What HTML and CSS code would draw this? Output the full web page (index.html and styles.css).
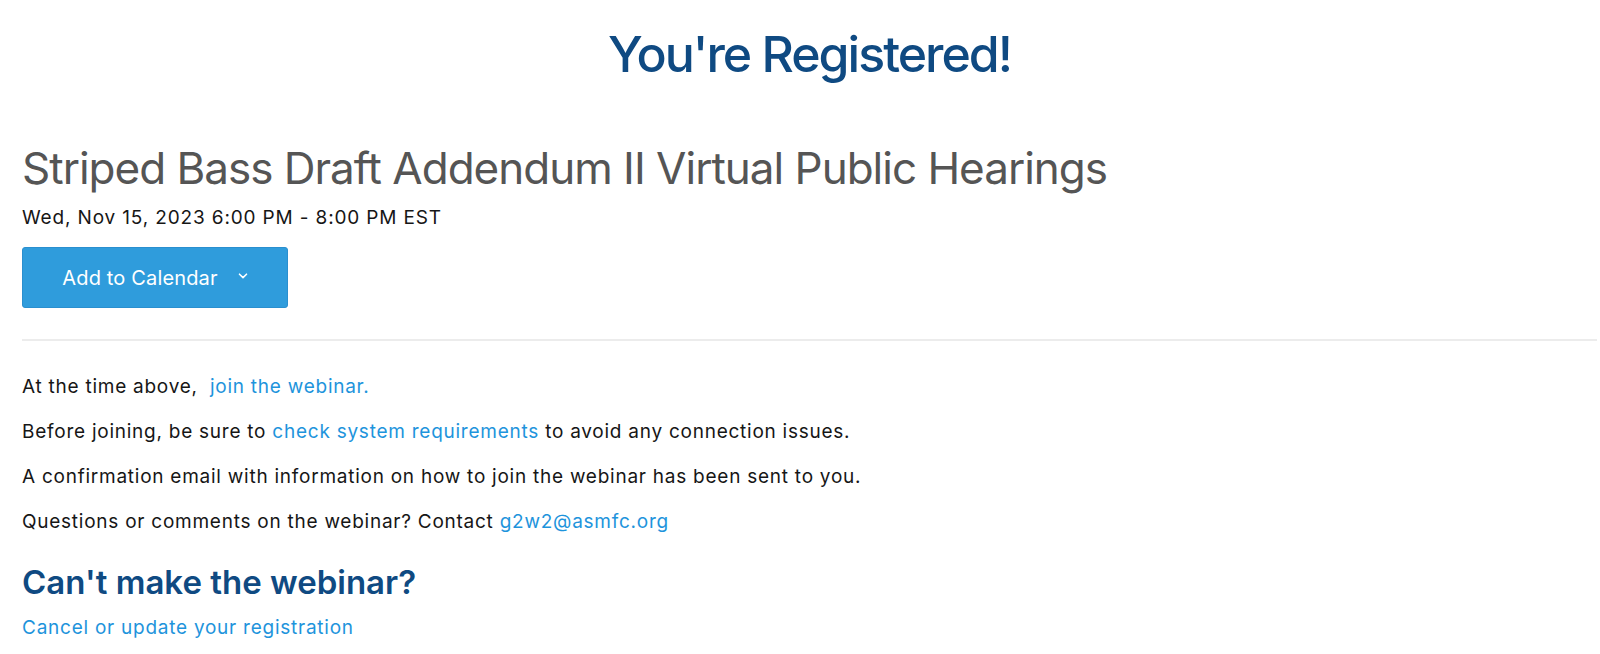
FILE: index.html
```html
<!DOCTYPE html>
<html lang="en">
<head>
<meta charset="utf-8">
<title>You're Registered!</title>
<link rel="stylesheet" href="styles.css">
</head>
<body>
<main class="page">
  <h1 class="page-title">You're Registered!</h1>
  <section class="event">
    <h2 class="event-title">Striped Bass Draft Addendum II Virtual Public Hearings</h2>
    <div class="event-date">Wed, Nov 15, 2023 6:00 PM - 8:00 PM EST</div>
    <button class="cal-btn" type="button">
      <span>Add to Calendar</span>
      <svg class="chev" width="10" height="6" viewBox="0 0 10 6" aria-hidden="true"><path d="M1.5 1.2 L5 4.6 L8.5 1.2" fill="none" stroke="#fff" stroke-width="1.6" stroke-linecap="round" stroke-linejoin="round"/></svg>
    </button>
  </section>
  <hr class="divider">
  <section class="info">
    <p>At the time above,&nbsp; <a href="#">join the webinar.</a></p>
    <p>Before joining, be sure to <a href="#">check system requirements</a> to avoid any connection issues.</p>
    <p>A confirmation email with information on how to join the webinar has been sent to you.</p>
    <p>Questions or comments on the webinar? Contact <a href="#">g2w2@asmfc.org</a></p>
  </section>
  <h3 class="cant">Can't make the webinar?</h3>
  <a class="cancel" href="#">Cancel or update your registration</a>
</main>
</body>
</html>
```

FILE: styles.css
```css
html, body {
  margin: 0;
  padding: 0;
  background: #fff;
}
body {
  font-family: Inter, "Noto Sans", "Liberation Sans", sans-serif;
  color: #161616;
}
.page {
  padding: 0 3px 0 22px;
}
.page-title {
  margin: 23px 0 0;
  text-align: center;
  font-size: 50px;
  line-height: 62px;
  font-weight: 500;
  letter-spacing: -2px;
  color: #0f4a82;
}
.event-title {
  margin: 57px 0 0;
  font-size: 44px;
  line-height: 52px;
  font-weight: 400;
  letter-spacing: -1px;
  color: #555;
}
.event-date {
  margin-top: 12px;
  font-size: 19px;
  line-height: 24px;
  letter-spacing: 0.85px;
  color: #161616;
}
.cal-btn {
  margin-top: 17px;
  width: 266px;
  height: 61px;
  display: flex;
  align-items: center;
  justify-content: center;
  gap: 20px;
  padding: 0;
  border: 1px solid #2a8fcf;
  border-radius: 3px;
  background: #2f9cdc;
  color: #fff;
  font-family: inherit;
  font-size: 20px;
  letter-spacing: 0.15px;
  cursor: pointer;
}
.chev {
  display: block;
  margin-top: -4px;
}
.divider {
  margin: 31px 0 0;
  border: 0;
  border-top: 2px solid #ececec;
}
.info {
  margin-top: 32px;
}
.info p {
  margin: 0 0 18px;
  font-size: 19px;
  line-height: 27px;
  letter-spacing: 0.75px;
}
.info p:last-child {
  margin-bottom: 0;
}
a {
  color: #1e94dc;
  text-decoration: none;
}
.cant {
  margin: 27px 0 0;
  font-size: 33px;
  line-height: 40px;
  font-weight: 600;
  color: #0f4a82;
}
.cancel {
  display: inline-block;
  margin-top: 14px;
  font-size: 19px;
  line-height: 24px;
  letter-spacing: 0.75px;
}
```
